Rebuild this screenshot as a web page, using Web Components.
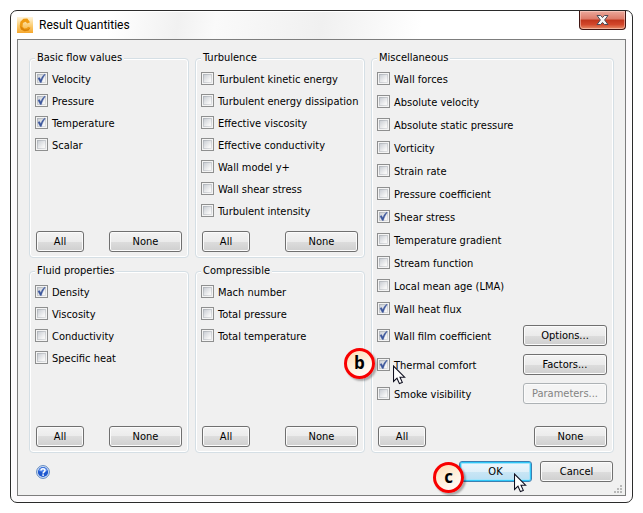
<!DOCTYPE html>
<html lang="en">
<head>
<meta charset="utf-8">
<title>Result Quantities</title>
<style>
    body {
        margin: 10px;
        background: #fff;
        color: #000;
        font: 11px/14px "DejaVu Sans Condensed", "DejaVu Sans", sans-serif;
    }

    .quantities {
        display: grid;
        grid-template-columns: 160fr 170fr 243fr;
        grid-template-rows: minmax(207px, auto) minmax(189px, auto);
        gap: 6px;
    }

    .misc {
        grid-column: 3;
        grid-row: 1 / span 2;
    }
</style>
</head>
<body>

<result-dialog heading="Result Quantities">
    <div class="quantities">
        <quantity-group heading="Basic flow values">
            <quantity-check label="Velocity" checked></quantity-check>
            <quantity-check label="Pressure" checked></quantity-check>
            <quantity-check label="Temperature" checked></quantity-check>
            <quantity-check label="Scalar"></quantity-check>
        </quantity-group>
        <quantity-group heading="Turbulence">
            <quantity-check label="Turbulent kinetic energy"></quantity-check>
            <quantity-check label="Turbulent energy dissipation"></quantity-check>
            <quantity-check label="Effective viscosity"></quantity-check>
            <quantity-check label="Effective conductivity"></quantity-check>
            <quantity-check label="Wall model y+"></quantity-check>
            <quantity-check label="Wall shear stress"></quantity-check>
            <quantity-check label="Turbulent intensity"></quantity-check>
        </quantity-group>
        <quantity-group class="misc" heading="Miscellaneous" roomy>
            <quantity-check label="Wall forces"></quantity-check>
            <quantity-check label="Absolute velocity"></quantity-check>
            <quantity-check label="Absolute static pressure"></quantity-check>
            <quantity-check label="Vorticity"></quantity-check>
            <quantity-check label="Strain rate"></quantity-check>
            <quantity-check label="Pressure coefficient"></quantity-check>
            <quantity-check label="Shear stress" checked></quantity-check>
            <quantity-check label="Temperature gradient"></quantity-check>
            <quantity-check label="Stream function"></quantity-check>
            <quantity-check label="Local mean age (LMA)"></quantity-check>
            <quantity-check label="Wall heat flux" checked></quantity-check>
            <quantity-check label="Wall film coefficient" checked tall>
                <dialog-button size="large">Options...</dialog-button>
            </quantity-check>
            <quantity-check label="Thermal comfort" checked tall step="b">
                <dialog-button size="large">Factors...</dialog-button>
            </quantity-check>
            <quantity-check label="Smoke visibility" tall>
                <dialog-button size="large" disabled>Parameters...</dialog-button>
            </quantity-check>
        </quantity-group>
        <quantity-group heading="Fluid properties">
            <quantity-check label="Density" checked></quantity-check>
            <quantity-check label="Viscosity"></quantity-check>
            <quantity-check label="Conductivity"></quantity-check>
            <quantity-check label="Specific heat"></quantity-check>
        </quantity-group>
        <quantity-group heading="Compressible">
            <quantity-check label="Mach number"></quantity-check>
            <quantity-check label="Total pressure"></quantity-check>
            <quantity-check label="Total temperature"></quantity-check>
        </quantity-group>
    </div>
    <dialog-button slot="actions" primary step="c">OK</dialog-button>
    <dialog-button slot="actions">Cancel</dialog-button>
</result-dialog>

<script>
// Lettered callout circle
class StepBadge extends HTMLElement {
    constructor() {
        super();
        this.attachShadow({ mode: 'open' });
        this.shadowRoot.innerHTML = `
            <style>
                :host {
                    display: flex;
                    align-items: center;
                    justify-content: center;
                    box-sizing: border-box;
                    width: 31px;
                    height: 31px;
                    padding-bottom: 2px;
                    border: 3px solid #f80000;
                    border-radius: 50%;
                    background: linear-gradient(150deg, #fde0bb 10%, #fff3e4 60%, #fff);
                    box-shadow: 2px 2px 2px rgba(0, 0, 0, .3);
                    color: #000;
                    font: bold 17px/20px "Open Sans", "Noto Sans", sans-serif;
                }
            </style>
            <slot></slot>
        `;
    }
}

// Arrow cursor
class MousePointer extends HTMLElement {
    constructor() {
        super();
        this.attachShadow({ mode: 'open' });
        this.shadowRoot.innerHTML = `
            <style>
                :host { display: block; width: 13px; height: 20px; pointer-events: none; }
                svg { display: block; }
            </style>
            <svg width="13" height="20" viewBox="0 0 13 20" aria-hidden="true">
                <path d="M.5 1V16.5L4 13.2L6.4 18.6L9.3 17.4L7 12.2H11.6Z" fill="#fff" stroke="#101020" stroke-width="1.1"/>
            </svg>
        `;
    }
}

class DialogButton extends HTMLElement {
    constructor() {
        super();
        this.attachShadow({ mode: 'open' });
        this.render();
    }

    get step() {
        return this.getAttribute('step') || '';
    }

    render() {
        const disabled = this.hasAttribute('disabled') ? 'disabled' : '';
        this.shadowRoot.innerHTML = `
            <style>
                :host { display: block; position: relative; width: 73px; }
                :host([size="small"]) { width: 48px; }
                :host([size="large"]) { width: 84px; }

                button {
                    display: block;
                    box-sizing: border-box;
                    width: 100%;
                    height: 21px;
                    padding: 1px 0 0;
                    border: 1px solid #707070;
                    border-radius: 3px;
                    background: linear-gradient(#f3f3f3, #ebebeb 50%, #dddddd 50%, #cfcfcf);
                    box-shadow: inset 0 0 0 1px #fbfbfb;
                    color: #000;
                    font: inherit;
                    line-height: 14px;
                    text-align: center;
                }

                :host([primary]) button {
                    border-color: #3c7fb1;
                    background: linear-gradient(#eef7fc, #e0f0f9 50%, #cae6f5 50%, #b9dff3);
                    box-shadow: inset 0 0 0 1px #30c8f8, inset 0 0 0 2px #a4e4fb;
                }

                button:disabled {
                    border-color: #adb2b5;
                    background: #f4f4f4;
                    color: #838383;
                }

                step-badge { position: absolute; top: 1px; left: -26px; }
                mouse-pointer { position: absolute; top: 12px; left: 55px; }
            </style>
            <button type="button" ${disabled}><slot></slot></button>
            ${this.step ? `<step-badge>${this.step}</step-badge><mouse-pointer></mouse-pointer>` : ''}
        `;
    }
}

// Tick box with its label, and an optional button on the right
class QuantityCheck extends HTMLElement {
    constructor() {
        super();
        this.attachShadow({ mode: 'open' });
        this.render();
    }

    get label() {
        return this.getAttribute('label') || '';
    }

    get step() {
        return this.getAttribute('step') || '';
    }

    render() {
        const checked = this.hasAttribute('checked') ? 'checked' : '';
        this.shadowRoot.innerHTML = `
            <style>
                :host {
                    display: flex;
                    align-items: flex-start;
                    justify-content: space-between;
                    position: relative;
                    box-sizing: border-box;
                    height: var(--row-height, 22px);
                    padding-right: 1px;
                }
                :host([tall]) { height: 29px; }

                label {
                    display: flex;
                    gap: 4px;
                    padding-top: 4px;
                    white-space: nowrap;
                }
                :host([tall]) label { padding-top: 8px; }

                .box { display: grid; width: 13px; height: 13px; }
                .box > * { grid-area: 1 / 1; }
                .text { padding-top: 1px; }

                input {
                    appearance: none;
                    box-sizing: border-box;
                    width: 13px;
                    height: 13px;
                    margin: 0;
                    border: 1px solid #8e8f8f;
                    background:
                        linear-gradient(135deg, #cbcfd5, #f6f6f6 80%) center / 7px 7px no-repeat,
                        linear-gradient(135deg, #aeb3b9, #e3e4e6) center / 9px 9px no-repeat,
                        #f4f4f4;
                }

                svg { display: none; pointer-events: none; }
                input:checked + svg { display: block; }

                ::slotted(*) { align-self: center; }

                step-badge { position: absolute; top: -2px; left: -33px; }
                mouse-pointer { position: absolute; top: 15px; left: 16px; }
            </style>
            <label>
                <span class="box">
                    <input type="checkbox" ${checked}>
                    <svg width="13" height="13" viewBox="0 0 13 13" aria-hidden="true">
                        <path d="M3 6.2L4.5 5.6L5.7 7.8C6.6 5.5 7.7 3.8 9.5 2.2L10.3 2.6C8.4 4.9 7.4 7 6.4 10.4H5.2Z" fill="#3c579c" stroke="#3c579c" stroke-width=".4"/>
                    </svg>
                </span>
                <span class="text">${this.label}</span>
            </label>
            <slot></slot>
            ${this.step ? `<step-badge>${this.step}</step-badge><mouse-pointer></mouse-pointer>` : ''}
        `;
    }
}

// Titled box of tick boxes with All / None under it
class QuantityGroup extends HTMLElement {
    constructor() {
        super();
        this.attachShadow({ mode: 'open' });
        this.shadowRoot.innerHTML = `
            <style>
                :host { display: grid; min-width: 0; }
                :host([roomy]) { --row-height: 23px; }

                fieldset {
                    display: flex;
                    flex-direction: column;
                    min-width: 0;
                    margin: 0;
                    padding: 3px 5px 5px;
                    border: 1px solid #d5dfe5;
                    border-radius: 4px;
                    box-shadow: inset 0 0 0 1px #fff;
                }

                /* the legend cuts the outer line, the fill hides the inner one */
                legend {
                    padding: 0 2px;
                    background: #f0f0f0;
                    line-height: 14px;
                }

                .content {
                    display: flex;
                    flex-direction: column;
                    justify-content: space-between;
                    height: 100%;
                }

                .actions {
                    display: flex;
                    justify-content: space-between;
                    padding: 0 1px;
                }
            </style>
            <fieldset>
                <legend>${this.getAttribute('heading') || ''}</legend>
                <div class="content">
                    <div><slot></slot></div>
                    <div class="actions">
                        <dialog-button size="small">All</dialog-button>
                        <dialog-button>None</dialog-button>
                    </div>
                </div>
            </fieldset>
        `;
    }
}

class ResultDialog extends HTMLElement {
    constructor() {
        super();
        this.attachShadow({ mode: 'open' });
        this.shadowRoot.innerHTML = `
            <style>
                :host {
                    display: block;
                    padding: 0 6px 6px;
                    border: 1px solid #2b2b2b;
                    border-radius: 7px;
                    background: linear-gradient(100deg, #fff 16%, #f1f1f1 27%, #fafafa 33%, #f0f0f0 50%, #fff 66%) top / 100% 28px no-repeat, #fcfafc;
                    box-shadow: inset 0 0 0 1px #fff;
                }

                header {
                    display: flex;
                    align-items: center;
                    gap: 6px;
                    height: 28px;
                }

                h1 {
                    flex: 1;
                    margin: 0;
                    font: 12px/16px Roboto, "Open Sans", sans-serif;
                }

                .logo { display: block; }

                .close {
                    align-self: flex-start;
                    width: 47px;
                    height: 19px;
                    padding: 0;
                    border: 1px solid #3f1512;
                    border-top: 0;
                    border-radius: 0 0 4px 4px;
                    background: linear-gradient(#eba99c, #dc7a68 45%, #c0351c 50%, #d2472b 75%, #e88d68);
                    box-shadow: inset 0 0 0 1px rgba(255, 220, 210, .5);
                }
                .close svg { display: block; margin: auto; }

                main {
                    position: relative;
                    padding: 11px 11px 13px;
                    border: 1px solid #7d7d7d;
                    background: #f0f0f0;
                }

                footer {
                    display: flex;
                    align-items: center;
                    gap: 8px;
                    margin-top: 8px;
                    padding: 0 1px;
                }

                .help {
                    width: 14px;
                    height: 14px;
                    margin: 0 auto 0 6px;
                    padding: 0;
                    border: 0;
                    background: none;
                }
                .help svg, .grip { display: block; }
                .grip { position: absolute; right: 3px; bottom: 2px; }
            </style>
            <header>
                <svg class="logo" width="16" height="16" viewBox="0 0 16 16" aria-hidden="true">
                    <defs>
                        <linearGradient id="tile" x2="0" y2="1">
                            <stop stop-color="#fff5dc"/>
                            <stop offset=".5" stop-color="#fbd07a"/>
                            <stop offset="1" stop-color="#f6a72c"/>
                        </linearGradient>
                    </defs>
                    <rect width="16" height="16" fill="url(#tile)"/>
                    <path d="M13 5.2L10.4 6.4L8.5 4.8L5.9 6L5.5 9.7L7.4 11.6L10 11L11 9.8L13.4 10.8L11.5 13.4L7.7 14.2L4 12.4L2.7 9L3.4 4.7L6.4 1.8L10.3 1.6Z" fill="#ef9b12"/>
                    <path d="M3.2 9L4 12.4L7.7 14.2L11.5 13.4L13.4 10.8L10.8 12.2L7.6 12.4Z" fill="#d98208"/>
                </svg>
                <h1>${this.getAttribute('heading') || ''}</h1>
                <button class="close" type="button" aria-label="Close">
                    <svg width="13" height="12" viewBox="0 0 13 12" aria-hidden="true">
                        <path d="M1 1.5H4.6L6.5 3.6L8.4 1.5H12L8.6 6L12 10.5H8.4L6.5 8.4L4.6 10.5H1L4.4 6Z" fill="#f6f6f6" stroke="#4b4d58" stroke-linejoin="round"/>
                    </svg>
                </button>
            </header>
            <main>
                <slot></slot>
                <footer>
                    <button class="help" type="button" aria-label="Help">
                        <svg width="14" height="14" viewBox="0 0 14 14" aria-hidden="true">
                            <circle cx="7" cy="7" r="6.4" fill="#dce8f8" stroke="#5b84bd"/>
                            <circle cx="7" cy="7" r="5.1" fill="#1d57cf"/>
                            <path d="M2.6 6A4.5 4.5 0 0 1 11.4 6Q7 7.6 2.6 6Z" fill="#5d8fec"/>
                            <path d="M5 5.5C5 3.2 9 3.2 9 5.4C9 6.8 7.1 6.8 7.1 8.4" fill="none" stroke="#fff" stroke-width="1.5"/>
                            <rect x="6.3" y="9.3" width="1.6" height="1.6" fill="#fff"/>
                        </svg>
                    </button>
                    <slot name="actions"></slot>
                </footer>
                <svg class="grip" width="8" height="8" viewBox="0 0 8 8" fill="#b8b8b8" aria-hidden="true">
                    <path d="M6 0h2v2h-2zM3 3h2v2h-2zM6 3h2v2h-2zM0 6h2v2h-2zM3 6h2v2h-2zM6 6h2v2h-2z"/>
                </svg>
            </main>
        `;
    }
}

customElements.define('step-badge', StepBadge);
customElements.define('mouse-pointer', MousePointer);
customElements.define('dialog-button', DialogButton);
customElements.define('quantity-check', QuantityCheck);
customElements.define('quantity-group', QuantityGroup);
customElements.define('result-dialog', ResultDialog);
</script>
</body>
</html>
